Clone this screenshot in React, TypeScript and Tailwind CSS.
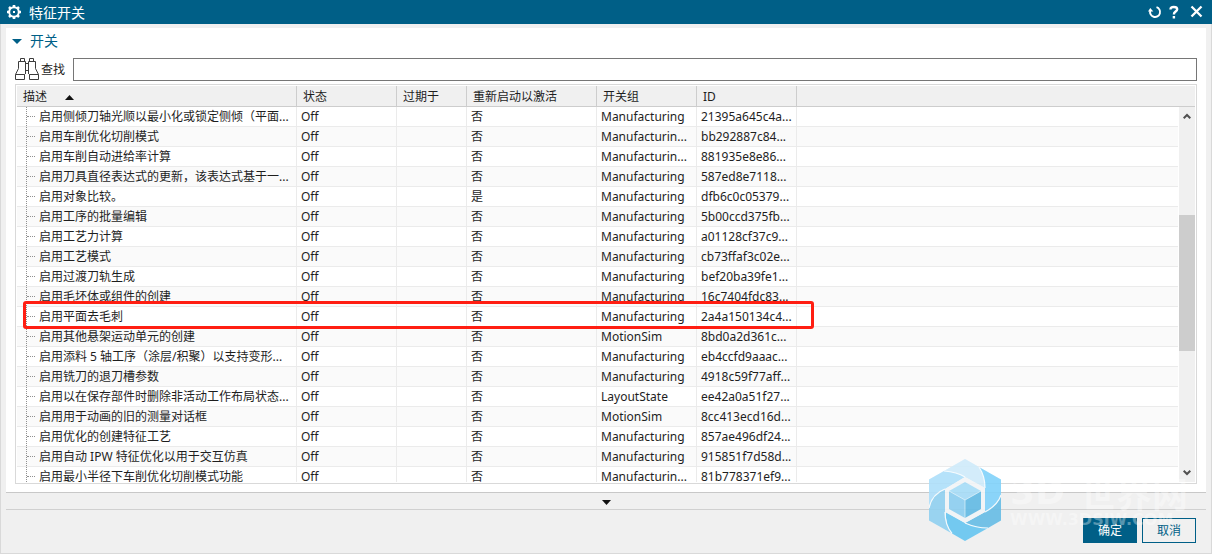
import React from "react";

type Row = { name: string; group: string; id: string; restart?: string };

const M = "Manufacturing";
const M_CUT = "Manufacturin...";

const rows: Row[] = [
  { name: "启用侧倾刀轴光顺以最小化或锁定侧倾（平面...", group: M, id: "21395a645c4a..." },
  { name: "启用车削优化切削模式", group: M_CUT, id: "bb292887c84..." },
  { name: "启用车削自动进给率计算", group: M_CUT, id: "881935e8e86..." },
  { name: "启用刀具直径表达式的更新，该表达式基于一...", group: M, id: "587ed8e7118..." },
  { name: "启用对象比较。", group: M, id: "dfb6c0c05379...", restart: "是" },
  { name: "启用工序的批量编辑", group: M, id: "5b00ccd375fb..." },
  { name: "启用工艺力计算", group: M, id: "a01128cf37c9..." },
  { name: "启用工艺模式", group: M, id: "cb73ffaf3c02e..." },
  { name: "启用过渡刀轨生成", group: M, id: "bef20ba39fe1..." },
  { name: "启用毛坯体或组件的创建", group: M, id: "16c7404fdc83..." },
  { name: "启用平面去毛刺", group: M, id: "2a4a150134c4..." },
  { name: "启用其他悬架运动单元的创建", group: "MotionSim", id: "8bd0a2d361c..." },
  { name: "启用添料 5 轴工序（涂层/积聚）以支持变形...", group: M, id: "eb4ccfd9aaac..." },
  { name: "启用铣刀的退刀槽参数", group: M, id: "4918c59f77aff..." },
  { name: "启用以在保存部件时删除非活动工作布局状态...", group: "LayoutState", id: "ee42a0a51f27..." },
  { name: "启用用于动画的旧的测量对话框", group: "MotionSim", id: "8cc413ecd16d..." },
  { name: "启用优化的创建特征工艺", group: M, id: "857ae496df24..." },
  { name: "启用自动 IPW 特征优化以用于交互仿真", group: M, id: "915851f7d58d..." },
  { name: "启用最小半径下车削优化切削模式功能", group: M_CUT, id: "81b778371ef9..." },
];

const th = "h-[21px] border-r border-b border-[#cdcdcd] p-0 pt-0.5 pl-1.5 text-left font-normal whitespace-nowrap";
const td = "h-5 overflow-hidden border-r border-b border-[#ebebeb] p-0 pl-1 whitespace-nowrap";

function GearIcon() {
  return (
    <svg className="h-4 w-4" viewBox="0 0 16 16" fill="none" stroke="#fff" aria-hidden="true">
      <circle cx="8" cy="8" r="4.800" strokeWidth="2" />
      <path
        strokeWidth="2.600"
        d="M8 1v2.200M8 12.800V15M1 8h2.200M12.800 8H15M3 3l1.600 1.600M11.400 11.400L13 13M13 3l-1.600 1.600M4.600 11.400L3 13"
      />
      <rect x="7" y="7" width="2" height="2" fill="#fff" stroke="none" />
    </svg>
  );
}

function BinocularsIcon() {
  return (
    <svg className="h-[23px] w-6" viewBox="0 0 24 23" fill="none" stroke="#3c3c3c" aria-hidden="true">
      <path d="M5.500 3.500v-3h4v3M3.500 10.500v-7h7v12.500M3.500 10.500L.5 16.500v5h9v-5M.5 16.500h9l1-1" />
      <path d="M18.500 3.500v-3h-4v3M20.500 10.500v-7h-7v12.500M20.500 10.500l3 6v5h-9v-5M23.500 16.500h-9l-1-1M10.500 5.500h3M10.500 12.500h3" />
    </svg>
  );
}

function CubeLogo() {
  return (
    <svg className="h-[82px] w-[72px] shrink-0 opacity-90" viewBox="0 0 72 82" aria-hidden="true">
      <path d="M36 0L72 20.500v41L36 82 0 61.500v-41z" fill="#eef6fa" />
      <path d="M15 12L36 0l14 8q6 9 6 21L36 18q-8-5-21-6z" fill="#cfebfa" />
      <path d="M50 8l22 12.500V36q-3 10-16 17V29q0-12-6-21z" fill="#80d2fa" />
      <path d="M72 36v25.500L59 69q-12 0-23-5l20-11q13-7 16-17z" fill="#66bde6" />
      <path d="M59 69L36 82 23 74.500Q16 66 17 53l19 11q11 5 23 5z" fill="#66c5f1" />
      <path d="M23 74.500L0 61.500V49q3-14 16-19v23q0 13 7 21.500z" fill="#90d0f0" />
      <path d="M0 49V20.500L15 12q13 1 21 6L16 30Q3 35 0 49z" fill="#aedffa" />
      <g fill="none" stroke="#f4fbfe" strokeWidth="1.200">
        <path d="M15 12q13 1 21 6M50 8q6 9 6 21M72 36q-3 10-16 17M59 69q-12 0-23-5M23 74.500Q16 66 16 53M0 49q3-14 16-19" />
      </g>
      <path d="M36 18l20 11v24L36 64 16 53V30z" fill="#f2f5f7" />
      <path d="M36 23l16 9-16 9-16-9z" fill="#a6dcf7" />
      <path d="M20 32l16 9v18l-16-9z" fill="#8ccef0" />
      <path d="M52 32l-16 9v18l16-9z" fill="#62bae4" />
      <path d="M20 32l16 9 16-9M36 41v18" fill="none" stroke="#dff3fc" strokeWidth=".7" />
    </svg>
  );
}

export default function App() {
  return (
    <div className="relative flex h-screen flex-col overflow-hidden bg-[#f0f0f0] font-['Noto_Sans','Noto_Sans_CJK_SC',sans-serif] text-xs text-[#1e1e1e]">
      <header className="flex h-6 shrink-0 items-center bg-[#005f87] pr-2 pl-1.5 text-white">
        <GearIcon />
        <h1 className="ml-[7px] pt-0.5 text-sm leading-[22px]">特征开关</h1>
        <div className="ml-auto flex items-center gap-[7px]">
          <button type="button" aria-label="重置" className="h-3.5 w-3.5">
            <svg viewBox="0 0 14 14" fill="none" stroke="#fff" strokeWidth="1.900">
              <path d="M8.500 2.200A5 5 0 1 1 2.300 5.500" />
              <path d="M0 6.500L2.300 3l3 3.500z" fill="#fff" stroke="none" />
            </svg>
          </button>
          <button type="button" aria-label="帮助" className="h-3.5 w-2.5">
            <svg viewBox="0 0 10 14" fill="none" stroke="#fff" strokeWidth="2.400">
              <path d="M1.500 4.500Q1.500 2 4.800 2T8.200 4.300Q8.200 5.600 6.500 6.600T4.900 9.500M4.900 11v2.400" />
            </svg>
          </button>
          <button type="button" aria-label="关闭" className="ml-1 h-3.5 w-3.5">
            <svg viewBox="0 0 14 14" fill="none" stroke="#fff" strokeWidth="2.300">
              <path d="M1.500 1.500l10 10M11.500 1.500l-10 10" />
            </svg>
          </button>
        </div>
      </header>

      <div className="flex min-h-0 flex-1 flex-col border-x border-b border-[#d9d9d9] px-[5px] pt-1">
        <main className="flex min-h-0 flex-1 flex-col border-b border-[#c8c8c8] bg-white px-[9px] pb-2">
          <button type="button" className="-ml-[3px] flex h-[30px] shrink-0 items-center pb-1 text-sm text-[#005f87]">
            <svg className="mr-2 h-[5px] w-2.5" viewBox="0 0 10 5" aria-hidden="true">
              <path d="M0 0h10L5 5z" fill="#005f87" />
            </svg>
            开关
          </button>
          <div className="mb-[3px] flex shrink-0 items-center">
            <label htmlFor="find" className="flex h-[23px] w-[58px] items-center gap-0.5 whitespace-nowrap">
              <BinocularsIcon />
              查找
            </label>
            <input id="find" type="text" className="h-[23px] min-w-0 flex-1 border border-[#767676] bg-white px-1 outline-none" />
          </div>

          <div className="flex min-h-0 flex-1 border border-[#d9d9d9] p-px">
            <div className="relative min-w-0 flex-1 overflow-hidden">
              <table className="w-full table-fixed border-separate border-spacing-0 leading-[19px]">
                <colgroup>
                  <col className="w-[280px]" />
                  <col className="w-[100px]" />
                  <col className="w-[70px]" />
                  <col className="w-[130px]" />
                  <col className="w-[100px]" />
                  <col className="w-[100px]" />
                  <col />
                </colgroup>
                <thead className="bg-[#f0f0f0] leading-[18px]">
                  <tr>
                    <th className={th}>
                      <span className="flex items-center gap-[18px]">
                        描述
                        <svg className="h-[5px] w-[9px]" viewBox="0 0 9 5" aria-hidden="true">
                          <path d="M0 5L4.500 0 9 5z" fill="#111" />
                        </svg>
                      </span>
                    </th>
                    <th className={th}>状态</th>
                    <th className={th}>过期于</th>
                    <th className={th}>重新启动以激活</th>
                    <th className={th}>开关组</th>
                    <th className={th}>ID</th>
                    <th className="border-b border-[#cdcdcd] p-0" />
                  </tr>
                </thead>
                <tbody>
                  {rows.map((r) => (
                    <tr key={r.id} className="even:bg-[#fafafa]">
                      <td className={td}>
                        <span className="ml-[5px] flex h-[19px] items-center border-l border-dotted border-[#909090]">
                          <span className="mr-1 w-2 border-t border-dotted border-[#909090]" />
                          {r.name}
                        </span>
                      </td>
                      <td className={td}>Off</td>
                      <td className={td} />
                      <td className={td}>{r.restart ?? "否"}</td>
                      <td className={td}>{r.group}</td>
                      <td className={td}>{r.id}</td>
                      <td className="border-b border-[#ebebeb] p-0" />
                    </tr>
                  ))}
                </tbody>
              </table>
              <div className="pointer-events-none absolute top-[215px] left-1.5 h-7 w-[791px] rounded-[3px] border-[3px] border-[#ff1e12]" />
            </div>
            <div className="flex w-[17px] shrink-0 flex-col">
              <div className="h-[21px] border-b border-[#cdcdcd] bg-[#f0f0f0]" />
              <div className="ml-px flex flex-1 flex-col items-center bg-[#f0f0f0] py-1.5">
                <svg className="h-[7px] w-2" viewBox="0 0 8 7" fill="none" stroke="#505050" strokeWidth="2" aria-hidden="true">
                  <path d="M.7 5.300L4 2l3.300 3.300" />
                </svg>
                <div className="flex-[95]" />
                <div className="w-full flex-[136] bg-[#cdcdcd]" />
                <div className="flex-[118]" />
                <svg className="h-[7px] w-2" viewBox="0 0 8 7" fill="none" stroke="#505050" strokeWidth="2" aria-hidden="true">
                  <path d="M.7 1.700L4 5l3.300-3.300" />
                </svg>
              </div>
            </div>
          </div>
        </main>

        <button type="button" aria-label="收起" className="flex h-[17px] shrink-0 items-center justify-center border-b border-[#d0d0d0] pt-0.5">
          <svg className="h-[5px] w-[9px]" viewBox="0 0 9 5" aria-hidden="true">
            <path d="M0 0h9L4.500 5z" fill="#111" />
          </svg>
        </button>
        <footer className="flex h-[43px] shrink-0 items-start justify-end gap-[5px] pt-2 pr-2.5">
          <button type="button" className="h-[25px] w-[54px] bg-[#005f87] text-white">确定</button>
          <button type="button" className="h-[25px] w-[54px] border border-[#005f87] text-[#005f87]">取消</button>
        </footer>
      </div>

      <div className="pointer-events-none absolute right-6 bottom-[13px] flex items-center gap-[9px]">
        <CubeLogo />
        <div className="w-[178px] whitespace-nowrap text-white/35">
          <div className="flex items-center justify-between leading-10 font-bold">
            <span className="font-['DejaVu_Sans',sans-serif] text-4xl leading-10">3D</span>
            <span className="font-['Noto_Sans_CJK_SC',sans-serif] text-4xl leading-10">世界网</span>
          </div>
          <div className="font-['DejaVu_Sans',sans-serif] text-base leading-4 font-bold">WWW.3DSJW.COM</div>
        </div>
      </div>
    </div>
  );
}
